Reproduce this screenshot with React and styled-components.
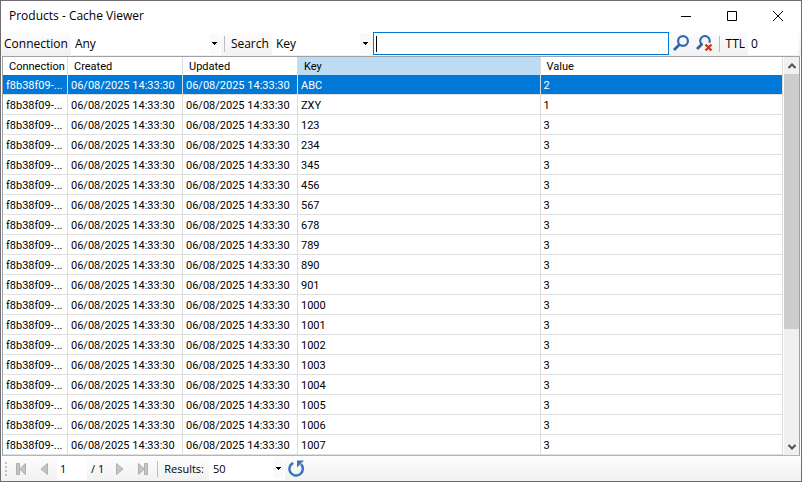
import React from 'react'
import styled, { createGlobalStyle, css } from 'styled-components';

const columns = ['Connection', 'Created', 'Updated', 'Key', 'Value'];
const connection = 'f8b38f09-...';
const stamp = '06/08/2025 14:33:30';

const entries = [
    ['ABC', 2], ['ZXY', 1], ['123', 3], ['234', 3], ['345', 3],
    ['456', 3], ['567', 3], ['678', 3], ['789', 3], ['890', 3],
    ['901', 3], ['1000', 3], ['1001', 3], ['1002', 3], ['1003', 3],
    ['1004', 3], ['1005', 3], ['1006', 3], ['1007', 3],
];

function DropDown({ id, value, width }) {
    return (
        <DropDownStyled $width={width}>
            <select id={id} defaultValue={value}>
                <option>{value}</option>
            </select>
            <span className="arrow">
                <svg width="5" height="3" viewBox="0 0 5 3" shapeRendering="crispEdges">
                    <path d="M0 0h5v1H4v1H3v1H2V2H1V1H0z" />
                </svg>
            </span>
        </DropDownStyled>
    )
}

function TitleBar() {
    return (
        <TitleBarStyled>
            <h1>Products - Cache Viewer</h1>
            <CaptionButton aria-label="Minimize">
                <svg width="10" height="10"><path d="M0 5.5h10" /></svg>
            </CaptionButton>
            <CaptionButton aria-label="Maximize">
                <svg width="10" height="10"><path d="M.5.5h9v9h-9z" /></svg>
            </CaptionButton>
            <CaptionButton aria-label="Close">
                <svg width="10" height="10"><path d="M0 0l10 10M10 0L0 10" /></svg>
            </CaptionButton>
        </TitleBarStyled>
    )
}

function SearchBar() {
    return (
        <SearchBarStyled>
            <Label htmlFor="connection">Connection</Label>
            <DropDown id="connection" value="Any" width={150} />
            <Separator />
            <Label htmlFor="search-in">Search</Label>
            <DropDown id="search-in" value="Key" width={100} />
            <SearchBox>
                <span className="caret" />
                <input type="text" aria-label="Search text" />
            </SearchBox>
            <ToolButton aria-label="Find">
                <svg width="17" height="17" viewBox="0 0 17 17">
                    <circle cx="10" cy="6" r="4.9" fill="none" stroke="#2b6cb3" strokeWidth="2.2" />
                    <path d="M6.5 9.5L1 15" stroke="#2b5f9e" strokeWidth="2.6" />
                </svg>
            </ToolButton>
            <ToolButton aria-label="Clear search">
                <svg width="17" height="17" viewBox="0 0 17 17">
                    <path d="M6.5 9.8A4.7 4.7 0 1 1 13.2 7.8" fill="none" stroke="#2b6cb3" strokeWidth="2.2" />
                    <path d="M6 9L1 14" stroke="#2b5f9e" strokeWidth="2.6" />
                    <path d="M9.5 9.5l6 6M15.5 9.5l-6 6" stroke="#cc3a1c" strokeWidth="2.4" />
                </svg>
            </ToolButton>
            <Separator />
            <Label htmlFor="ttl">TTL</Label>
            <Field id="ttl" type="text" defaultValue="0" $width={50} />
        </SearchBarStyled>
    )
}

function CacheTable() {
    return (
        <TableStyled>
            <colgroup>
                <col className="connection" />
                <col className="date" />
                <col className="date" />
                <col />
                <col />
            </colgroup>
            <thead>
                <tr>
                    {columns.map((name) => (
                        <HeaderCell key={name} $active={name === 'Key'}>{name}</HeaderCell>
                    ))}
                </tr>
            </thead>
            <tbody>
                {entries.map(([key, value], index) => (
                    <Row key={key} $selected={index === 0}>
                        <td>{connection}</td>
                        <td>{stamp}</td>
                        <td>{stamp}</td>
                        <td>{key}</td>
                        <td>{value}</td>
                    </Row>
                ))}
            </tbody>
        </TableStyled>
    )
}

function ScrollBar() {
    return (
        <ScrollBarStyled>
            <button aria-label="Scroll up">
                <svg width="8" height="6"><path d="M.5 5L4 1.5 7.5 5" /></svg>
            </button>
            <div className="track">
                <div className="thumb" />
            </div>
            <button aria-label="Scroll down">
                <svg width="8" height="6"><path d="M.5 1L4 4.5 7.5 1" /></svg>
            </button>
        </ScrollBarStyled>
    )
}

function Pager() {
    return (
        <PagerStyled>
            <Grip><i /><i /><i /><i /></Grip>
            <PageButton aria-label="First page">
                <svg width="12" height="12"><path d="M1.5.5h3v11h-3zM10.5.5v11L4.5 6z" /></svg>
            </PageButton>
            <PageButton aria-label="Previous page">
                <svg width="12" height="12"><path d="M9.5.5v11L3 6z" /></svg>
            </PageButton>
            <Field type="text" aria-label="Page" defaultValue="1" $width={30} />
            <span className="total">/ 1</span>
            <PageButton aria-label="Next page">
                <svg width="12" height="12"><path d="M2.5.5v11L9 6z" /></svg>
            </PageButton>
            <PageButton aria-label="Last page">
                <svg width="12" height="12"><path d="M7.5.5h3v11h-3zM1.5.5v11L7.5 6z" /></svg>
            </PageButton>
            <Separator />
            <Label htmlFor="results">Results:</Label>
            <DropDown id="results" value="50" width={76} />
            <ToolButton aria-label="Refresh">
                <svg width="17" height="17" viewBox="0 0 17 17">
                    <path d="M5.2 2.8A6.7 6.7 0 1 0 13 4.2" fill="none" stroke="#3a76b8" strokeWidth="2.5" />
                    <path d="M9 .5h7L9 7.500z" fill="#3a76b8" />
                </svg>
            </ToolButton>
        </PagerStyled>
    )
}

function App() {
    return (
        <>
            <GlobalStyle />
            <WindowStyled>
                <TitleBar />
                <SearchBar />
                <GridStyled>
                    <CacheTable />
                    <ScrollBar />
                </GridStyled>
                <Pager />
            </WindowStyled>
        </>
    )
}

const GlobalStyle = createGlobalStyle`
    *{
        box-sizing: border-box;
        margin: 0;
        padding: 0;
    }
    body{
        background: #fff;
        font: 11px/16px "Open Sans", "Noto Sans", sans-serif;
        color: #000;
    }
    button, input, select{
        font: inherit;
        color: inherit;
        border: 0;
        background: none;
        outline: none;
    }
    svg{
        display: block;
    }
`;

const WindowStyled = styled.main`
    display: flex;
    flex-direction: column;
    min-height: 100vh;
    border: 1px solid #6e6e70;
    background: #fff;
`;

const TitleBarStyled = styled.header`
    display: flex;
    height: 30px;
    h1{
        flex: 1;
        padding-left: 8px;
        font-size: 12px;
        font-weight: 400;
        line-height: 30px;
    }
`;

const CaptionButton = styled.button`
    display: flex;
    align-items: center;
    justify-content: center;
    width: 46px;
    svg{
        fill: none;
        stroke: #000;
    }
`;

const bar = css`
    display: flex;
    align-items: center;
    height: 25px;
    background: linear-gradient(#fdfdfd, #f1f1f1);
`;

const SearchBarStyled = styled.div`
    ${bar}
    padding-right: 3px;
    font-size: 12px;
`;

const Label = styled.label`
    padding: 0 3px;
    white-space: nowrap;
`;

const Separator = styled.span`
    width: 1px;
    height: 16px;
    margin: 0 3px;
    background: #bdbdbd;
`;

const DropDownStyled = styled.div`
    position: relative;
    width: ${(props) => props.$width}px;
    height: 23px;
    background: #fff;
    select{
        appearance: none;
        width: 100%;
        height: 100%;
        padding-left: 4px;
    }
    .arrow{
        position: absolute;
        top: 1px;
        right: 1px;
        bottom: 1px;
        display: flex;
        align-items: center;
        padding: 0 3px;
        background: #fafafa;
        pointer-events: none;
    }
`;

const SearchBox = styled.div`
    display: flex;
    align-items: center;
    flex: 1;
    height: 23px;
    margin: 0 1px;
    padding-left: 2px;
    border: 1px solid #0078d7;
    background: #fff;
    .caret{
        width: 1px;
        height: 16px;
        background: #000;
    }
    input{
        flex: 1;
        min-width: 0;
    }
`;

const Field = styled.input`
    width: ${(props) => props.$width}px;
    height: 23px;
    padding-left: 3px;
    background: #fff;
`;

const ToolButton = styled.button`
    display: flex;
    align-items: center;
    justify-content: center;
    width: 23px;
    height: 22px;
`;

const GridStyled = styled.section`
    display: flex;
    flex: 1;
    margin: 0 1px;
    border: 1px solid #a0a0a5;
    border-bottom-color: #b4b4b4;
`;

const TableStyled = styled.table`
    flex: 1;
    align-self: flex-start;
    table-layout: fixed;
    width: 100%;
    border-collapse: separate;
    border-spacing: 0;
    font-family: Roboto, "Liberation Sans", sans-serif;
    .connection{
        width: 65px;
    }
    .date{
        width: 115px;
    }
    th, td{
        padding-top: 1px;
        white-space: nowrap;
        text-align: left;
        border-right: 1px solid #dcdcdc;
    }
    td{
        height: 20px;
        padding-top: 2px;
        padding-left: 3px;
        border-bottom: 1px solid #e0e0e0;
    }
`;

const HeaderCell = styled.th`
    height: 18px;
    padding-left: 6px;
    font-weight: 400;
    background: ${(props) => props.$active ? '#bcdcf4' : '#fff'};
`;

const Row = styled.tr`
    color: ${(props) => props.$selected ? '#fff' : '#000'};
    background: ${(props) => props.$selected ? '#0078d7' : '#fff'};
`;

const ScrollBarStyled = styled.div`
    display: flex;
    flex-direction: column;
    width: 15px;
    margin-left: 1px;
    background: #f0f0f0;
    button{
        display: flex;
        align-items: center;
        justify-content: center;
        height: 17px;
    }
    svg{
        fill: none;
        stroke: #505050;
        stroke-width: 2;
    }
    .track{
        flex: 1;
    }
    .thumb{
        height: 70%;
        background: #cdcdcd;
    }
`;

const PagerStyled = styled.footer`
    ${bar}
    input{
        margin-left: 2px;
    }
    .total{
        padding: 0 4px;
    }
    label{
        padding-right: 5px;
    }
`;

const Grip = styled.span`
    display: flex;
    flex-direction: column;
    gap: 2px;
    margin: 0 2px 0 4px;
    i{
        width: 2px;
        height: 2px;
        background: #c0c0c0;
    }
`;

const PageButton = styled.button`
    display: flex;
    align-items: center;
    justify-content: center;
    width: 23px;
    height: 22px;
    svg{
        fill: #c4c4c4;
        stroke: #b0b0b0;
    }
`;

export default App;
